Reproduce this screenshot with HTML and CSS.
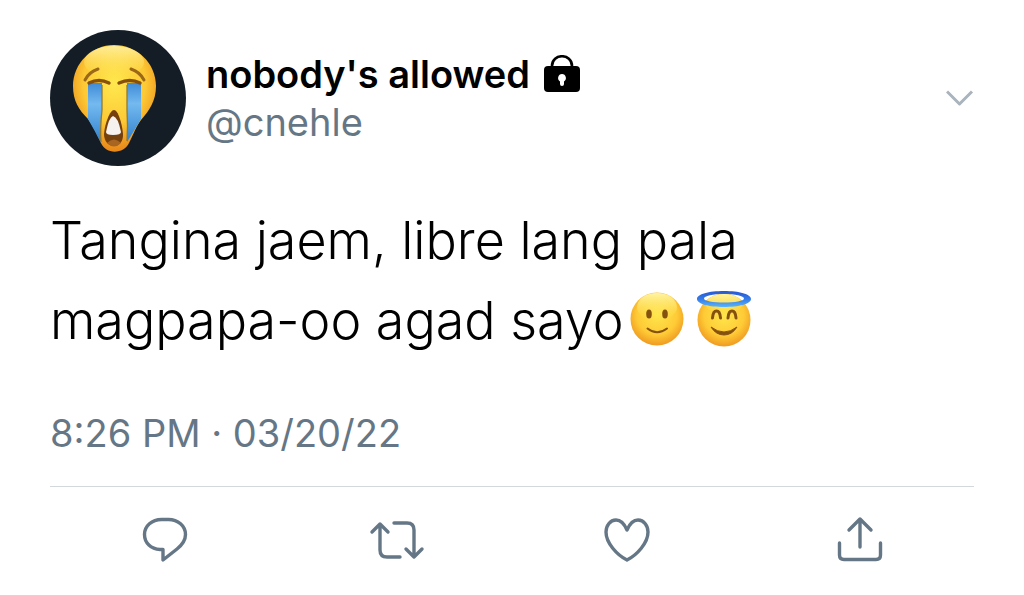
FILE: index.html
```html
<!DOCTYPE html>
<html lang="tl">
<head>
<meta charset="utf-8">
<meta name="viewport" content="width=device-width, initial-scale=1">
<title>Post by nobody's allowed</title>
<link rel="stylesheet" href="styles.css">
</head>
<body>
<article class="tweet">
  <header class="tweet-header">
    <svg class="avatar" viewBox="0 0 136 136" role="img" aria-label="Profile picture">
      <defs>
        <radialGradient id="cry-face" cx="50%" cy="36%" r="62%">
          <stop offset="0" stop-color="#ffe84e"/>
          <stop offset=".6" stop-color="#fdc935"/>
          <stop offset="1" stop-color="#e98a1a"/>
        </radialGradient>
        <linearGradient id="cry-shine" x1="0" y1="0" x2="0" y2="1">
          <stop offset="0" stop-color="#fff6b4" stop-opacity=".8"/>
          <stop offset="1" stop-color="#ffe650" stop-opacity="0"/>
        </linearGradient>
        <linearGradient id="tear" x1="0" y1="0" x2="0" y2="1">
          <stop offset="0" stop-color="#3f8bd6"/>
          <stop offset=".35" stop-color="#74baf0"/>
          <stop offset="1" stop-color="#2f80cc"/>
        </linearGradient>
      </defs>
      <circle cx="68" cy="68" r="68" fill="#141d26"/>
      <path d="M64 15C87 15 106 33 106 56C106 71 99 81 91 90C85 98 83 106 79 113C74 124 56 125 51 113C47 105 44 97 38 89C29 80 23 71 23 56C23 33 42 15 64 15Z" fill="url(#cry-face)"/>
      <ellipse cx="64" cy="32" rx="30" ry="16" fill="url(#cry-shine)"/>
      <path d="M38 53H52V80Q50 98 51 113Q45 101 38 89Z" fill="url(#tear)"/>
      <path d="M77 53H91V89Q84 101 77 112Q78 96 77 80Z" fill="url(#tear)"/>
      <path d="M52 55V80Q50 98 51 112M77 55V80Q78 96 77 111" fill="none" stroke="#8f7a35" stroke-width="1.3"/>
      <path d="M39 53Q49 48 59 53M69 53Q80 48 90 53" fill="none" stroke="#87500d" stroke-width="3.4" stroke-linecap="round"/>
      <path d="M35 50Q39 42 48 39M81 39Q90 42 94 50" fill="none" stroke="#9b6817" stroke-width="3" stroke-linecap="round"/>
      <path d="M64 80C68 80 72 93 73 104C74 120 54 120 54 104C55 93 60 80 64 80Z" fill="#75400b"/>
      <path d="M63 86Q68 87 71 102Q71 105 63 105Q56 105 56 102Q59 87 63 86Z" fill="#f4f1ef"/>
      <path d="M57 113Q64 106 71 113Q64 120 57 113Z" fill="#a86522"/>
    </svg>
    <div class="author">
      <h1 class="name">nobody's allowed
        <svg class="lock" viewBox="0 0 36 38" role="img" aria-label="Protected account">
          <path d="M8 13V11C8 -2 28 -2 28 11V13" fill="none" stroke="#000" stroke-width="2.600"/>
          <rect y="11" width="36" height="26" rx="4"/>
          <path d="M18 19a4 4 0 0 1 2 7.400V29a2 2 0 0 1-4 0V26.400A4 4 0 0 1 18 19Z" fill="#fff"/>
        </svg>
      </h1>
      <a class="handle" href="#profile">@cnehle</a>
    </div>
    <button class="more" type="button" aria-label="More options">
      <svg width="28" height="16" viewBox="0 0 28 16"><path d="M1 1.500L13.500 14L26 1.500"/></svg>
    </button>
  </header>
  <p class="message">Tangina jaem, libre lang pala<br>magpapa-oo agad sayo<span class="emojis">
      <svg width="54" height="58" viewBox="0 0 54 58" role="img" aria-label="Slightly smiling face">
        <defs>
          <radialGradient id="face" cx="50%" cy="42%" r="58%">
            <stop offset="0" stop-color="#ffe54b"/>
            <stop offset=".65" stop-color="#fecb36"/>
            <stop offset="1" stop-color="#f09a20"/>
          </radialGradient>
          <linearGradient id="shine" x1="0" y1="0" x2="0" y2="1">
            <stop offset="0" stop-color="#fff5a6"/>
            <stop offset="1" stop-color="#ffe54b" stop-opacity="0"/>
          </linearGradient>
        </defs>
        <circle cx="27" cy="29" r="26.500" fill="url(#face)"/>
        <ellipse cx="27" cy="17" rx="20" ry="14" fill="url(#shine)"/>
        <ellipse cx="19" cy="24" rx="2.800" ry="4.500" fill="#85510f"/>
        <ellipse cx="35" cy="24" rx="2.800" ry="4.500" fill="#85510f"/>
        <path d="M17.500 38.500Q27 46 37 38.500" fill="none" stroke="#85510f" stroke-width="2" stroke-linecap="round"/>
      </svg>
      <svg width="56" height="58" viewBox="0 0 56 58" role="img" aria-label="Smiling face with halo">
        <defs>
          <linearGradient id="halo" x1="0" y1="0" x2="0" y2="1">
            <stop offset="0" stop-color="#2855cf"/>
            <stop offset=".5" stop-color="#347be8"/>
            <stop offset="1" stop-color="#59b5fa"/>
          </linearGradient>
        </defs>
        <circle cx="28" cy="30" r="26.500" fill="url(#face)"/>
        <ellipse cx="28" cy="14" rx="18" ry="10" fill="url(#shine)"/>
        <path fill-rule="evenodd" d="M28 1C43 1 55 4 55 9C55 14 43 17 28 17C13 17 1 14 1 9C1 4 13 1 28 1ZM28 4C17 4 8 6 8 8.500C8 11 17 12.500 28 12.500C39 12.500 48 11 48 8.500C48 6 39 4 28 4Z" fill="url(#halo)"/>
        <path d="M16.500 28Q17 21 20.500 21Q24 21 24.500 28M32 28Q32.500 21 36 21Q39.500 21 40 28" fill="none" stroke="#85510f" stroke-width="3" stroke-linecap="round"/>
        <path d="M15 37Q28 47 41 37Q36 45 28 45Q20 45 15 37Z" fill="#85510f" stroke="#85510f" stroke-linejoin="round"/>
      </svg></span></p>
  <time class="timestamp" datetime="2022-03-20T20:26">8:26 PM · 03/20/22</time>
  <div class="actions">
    <button type="button" aria-label="Reply">
      <svg viewBox="0 0 56 56"><path d="M23.500 7.500H30.500C40 7.500 47.500 14 47.500 22.500C47.500 29 44 33 39 37L25 48V37.500H22C13 37 6.500 31 6.500 22.500C6.500 14 14 7.500 23.500 7.500Z"/></svg>
    </button>
    <button type="button" aria-label="Repost">
      <svg viewBox="0 0 56 56"><path d="M3 20L11 12L19 20M11 12V38Q11 45 18 45H31M25 11H38Q45 11 45 18V45M37 37L45 45L53 37"/></svg>
    </button>
    <button type="button" aria-label="Like">
      <svg viewBox="0 0 56 56"><path d="M27 18C24 11 20 8 16 8C10 8 6 14 6 20C6 31 17 43 27 48C37 43 48 31 48 20C48 14 44 8 38 8C34 8 30 11 27 18Z"/></svg>
    </button>
    <button type="button" aria-label="Share">
      <svg viewBox="0 0 56 56"><path d="M29 35V7M18 18L29 7L40 18M8.500 31V43Q8.500 47.500 13 47.500H45Q49.500 47.500 49.500 43V31"/></svg>
    </button>
  </div>
</article>
</body>
</html>
```
FILE: styles.css
```css
* {
  box-sizing: border-box;
}

body {
  margin: 0;
  background: #fff;
  color: #000;
  font-family: Inter, "Liberation Sans", sans-serif;
}

.tweet {
  padding: 30px 50px 0;
  border-bottom: 1px solid #d3d8dc;
}

.tweet-header {
  display: flex;
  gap: 20px;
}

.avatar {
  flex: none;
  width: 136px;
  height: 136px;
}

.author {
  flex: 1;
  padding-top: 20px;
}

.name {
  display: flex;
  align-items: center;
  gap: 14px;
  margin: 0;
  font-size: 38px;
  font-weight: 600;
  line-height: 48px;
}

.lock {
  width: 36px;
  height: 38px;
}

.handle {
  display: block;
  color: #657786;
  font-size: 38px;
  line-height: 48px;
  text-decoration: none;
}

button {
  padding: 0;
  border: 0;
  background: none;
  cursor: pointer;
}

button svg {
  display: block;
  fill: none;
  stroke: #657786;
  stroke-width: 3.4;
  stroke-linecap: round;
  stroke-linejoin: round;
}

.more {
  align-self: center;
}

.more svg {
  stroke: #aab4bd;
  stroke-width: 3;
  stroke-linecap: butt;
}

.message {
  margin: 35px 0 40px;
  font-size: 52px;
  font-weight: 300;
  line-height: 80px;
}

.emojis {
  display: inline-flex;
  gap: 12px;
  margin-left: 6px;
  line-height: 1;
  vertical-align: -9px;
}

.timestamp {
  display: block;
  padding-bottom: 21px;
  border-bottom: 1px solid #d3d8dc;
  color: #657786;
  font-size: 38px;
  line-height: 64px;
}

.actions {
  display: grid;
  grid-template-columns: repeat(4, 1fr);
  justify-items: center;
  padding: 25px 0 27px;
}

.actions svg {
  width: 56px;
  height: 56px;
}
```
